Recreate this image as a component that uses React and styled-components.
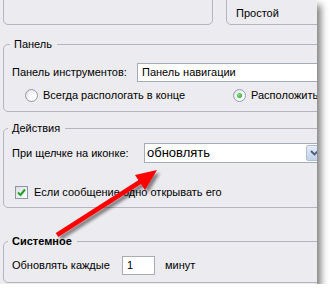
import React from "react";
import styled, { createGlobalStyle } from "styled-components";

const Global = createGlobalStyle`
  html, body { margin: 0; padding: 0; background: #ffffff; }
  body { font-family: "Liberation Sans", Arial, sans-serif; font-size: 11px; color: #000; }
`;

const Panel = styled.div`
  position: relative;
  width: 317px;
  height: 284px;
  box-sizing: border-box;
  background: #ecebf0;
  box-shadow: 4px 5px 7px rgba(0, 0, 0, 0.5);
  overflow: hidden;
  display: flex;
  flex-direction: column;
  padding-left: 3px;
`;

const TopRow = styled.div`
  display: flex;
  gap: 13px;
  margin-top: -16px;
  margin-right: -30px;
`;

const TopBox = styled.div`
  box-sizing: border-box;
  height: 41px;
  border: 1px solid #b5b4bc;
  border-radius: 5px;
  width: ${(p) => (p.$width ? `${p.$width}px` : "auto")};
  flex: ${(p) => (p.$width ? "none" : "1")};
  display: flex;
  align-items: flex-end;
  padding: 0 0 4px 9px;
  line-height: 13px;
`;

const Group = styled.fieldset`
  margin: ${(p) => p.$mt}px -30px 0 0;
  padding: ${(p) => p.$pt}px 0 ${(p) => p.$pb}px 8px;
  border: 1px solid #b5b4bc;
  border-radius: 5px;
  min-width: 0;
`;

const Legend = styled.legend`
  line-height: 13px;
  height: 13px;
  padding: 0 ${(p) => p.$pr}px 0 ${(p) => p.$pl}px;
  margin-left: ${(p) => p.$ml}px;
  font-weight: ${(p) => (p.$bold ? 700 : 400)};
`;

const Row = styled.div`
  display: flex;
  align-items: center;
  height: ${(p) => p.$h}px;
`;

const Label = styled.span`
  flex: none;
  width: ${(p) => (p.$w ? `${p.$w}px` : "auto")};
  line-height: 13px;
`;

const TextBox = styled.div`
  box-sizing: border-box;
  height: 19px;
  flex: ${(p) => (p.$w ? "none" : "1")};
  width: ${(p) => (p.$w ? `${p.$w}px` : "auto")};
  margin-right: ${(p) => p.$mr || 0}px;
  background: #fff;
  border: 1px solid #a5acb5;
  padding: 0 4px;
  display: flex;
  align-items: center;
  line-height: 13px;
`;

const Combo = styled.div`
  box-sizing: border-box;
  flex: none;
  width: 179px;
  height: 20px;
  background: #fff;
  border: 1px solid #a5acb5;
  display: flex;
  align-items: stretch;
`;

const ComboText = styled.span`
  flex: 1;
  padding-left: 2px;
  font-size: 13px;
  line-height: 18px;
`;

const ComboButton = styled.span`
  flex: none;
  width: 16px;
  margin: 1px 0;
  box-sizing: border-box;
  border: 1px solid #aebfdc;
  border-radius: 2px;
  background: linear-gradient(#e6ecf7, #c3d0e8);
  display: flex;
  align-items: center;
  justify-content: center;
`;

const Options = styled.div`
  display: flex;
  align-items: center;
  height: 14px;
  margin-top: 6px;
  padding-left: 13px;
`;

const Option = styled.label`
  display: flex;
  align-items: center;
  gap: 5px;
  flex: none;
  width: ${(p) => (p.$w ? `${p.$w}px` : "auto")};
  white-space: nowrap;
  line-height: 13px;
`;

const RadioCircle = styled.span`
  box-sizing: border-box;
  width: 13px;
  height: 13px;
  border-radius: 50%;
  border: 1px solid #939bab;
  background: radial-gradient(circle at 65% 65%, #ffffff 30%, #d8d9e2 100%);
  display: flex;
  align-items: center;
  justify-content: center;
  &::after {
    content: "";
    display: ${(p) => (p.$checked ? "block" : "none")};
    width: 5px;
    height: 5px;
    border-radius: 50%;
    background: radial-gradient(circle at 40% 40%, #7fe27f, #1f9a1f);
  }
`;

const CheckRow = styled.label`
  display: flex;
  align-items: center;
  gap: 6px;
  height: 13px;
  margin-top: 23px;
  padding-left: 3px;
  white-space: nowrap;
  line-height: 13px;
`;

const CheckBox = styled.span`
  box-sizing: border-box;
  width: 13px;
  height: 13px;
  border: 1px solid #8f96a3;
  background: linear-gradient(135deg, #dcdde4, #ffffff);
  display: flex;
  align-items: center;
  justify-content: center;
`;

const Arrow = styled.svg`
  position: absolute;
  left: 0;
  top: 0;
  pointer-events: none;
`;

export default function App() {
  return (
    <>
      <Global />
      <Panel>
        <TopRow>
          <TopBox $width={210} />
          <TopBox>Простой</TopBox>
        </TopRow>

        <Group $mt={13} $pt={12} $pb={9}>
          <Legend $pl={4} $pr={5} $ml={-2}>Панель</Legend>
          <Row $h={19}>
            <Label $w={125}>Панель инструментов:</Label>
            <TextBox>Панель навигации</TextBox>
          </Row>
          <Options>
            <Option $w={208}>
              <RadioCircle />
              Всегда распологать в конце
            </Option>
            <Option>
              <RadioCircle $checked />
              Расположить
            </Option>
          </Options>
        </Group>

        <Group $mt={10} $pt={8} $pb={8}>
          <Legend $pl={4} $pr={5} $ml={-4}>Действия</Legend>
          <Row $h={20}>
            <Label $w={132}>При щелчке на иконке:</Label>
            <Combo>
              <ComboText>обновлять</ComboText>
              <ComboButton>
                <svg width="9" height="6" viewBox="0 0 9 6">
                  <path d="M1 1 L4.5 4.5 L8 1" fill="none" stroke="#4a5c80" strokeWidth="1.8" />
                </svg>
              </ComboButton>
            </Combo>
          </Row>
          <CheckRow>
            <CheckBox>
              <svg width="9" height="9" viewBox="0 0 9 9">
                <path d="M1 4.5 L3.5 7 L8 1.5" fill="none" stroke="#21a121" strokeWidth="2" />
              </svg>
            </CheckBox>
            Если сообщение одно открывать его
          </CheckRow>
        </Group>

        <Group $mt={27} $pt={8} $pb={7}>
          <Legend $pl={4} $pr={5} $ml={-4} $bold>Системное</Legend>
          <Row $h={19}>
            <Label $w={110}>Обновлять каждые</Label>
            <TextBox $w={33} $mr={10}>1</TextBox>
            <Label>минут</Label>
          </Row>
        </Group>

        <Arrow width="317" height="284" viewBox="0 0 317 284">
          <defs>
            <filter id="sh" x="-20%" y="-20%" width="140%" height="140%">
              <feDropShadow dx="3" dy="3" stdDeviation="1.6" floodColor="#000" floodOpacity="0.45" />
            </filter>
          </defs>
          <g filter="url(#sh)">
            <line x1="57" y1="235" x2="143" y2="180" stroke="#ff0000" strokeWidth="4.5" />
            <polygon points="157,170 135,175 145,190" fill="#ff0000" />
          </g>
        </Arrow>
      </Panel>
    </>
  );
}
